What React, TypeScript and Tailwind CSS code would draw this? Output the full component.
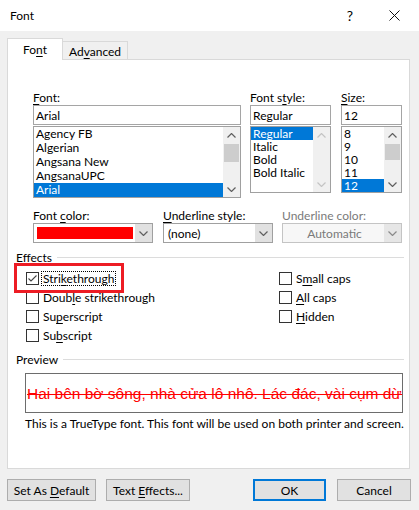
import React from "react";

const UI = "[font-family:Lato,'Noto_Sans',sans-serif]";

function U({ children }: { children: React.ReactNode }) {
  return <span className="underline decoration-1 underline-offset-[2px]">{children}</span>;
}

function Chevron({ up = false, color = "#606060" }: { up?: boolean; color?: string }) {
  return (
    <svg width="9" height="5" viewBox="0 0 9 5">
      <path
        d={up ? "M0.5 4.5 L4.5 0.5 L8.5 4.5" : "M0.5 0.5 L4.5 4.5 L8.5 0.5"}
        fill="none"
        stroke={color}
        strokeWidth="1.2"
      />
    </svg>
  );
}

function ScrollBar({ disabled = false, thumbTop = 0, thumbH = 0 }: { disabled?: boolean; thumbTop?: number; thumbH?: number }) {
  const c = disabled ? "#c4c4c4" : "#606060";
  return (
    <div className="flex w-[17px] flex-col bg-[#f0f0f0]">
      <div className="flex h-[16px] items-center justify-center">
        <Chevron up color={c} />
      </div>
      <div className="relative flex-1">
        {!disabled && (
          <div className="absolute left-[1px] right-[1px] bg-[#cdcdcd]" style={{ top: thumbTop, height: thumbH }} />
        )}
      </div>
      <div className="flex h-[16px] items-center justify-center">
        <Chevron color={c} />
      </div>
    </div>
  );
}

function Check({ checked = false }: { checked?: boolean }) {
  return (
    <div className="flex h-[13px] w-[13px] shrink-0 items-center justify-center border border-[#333333] bg-white">
      {checked && (
        <svg width="11" height="11" viewBox="0 0 11 11">
          <path d="M1.5 5.5 L4 8 L9.5 2.5" fill="none" stroke="#444444" strokeWidth="1.1" />
        </svg>
      )}
    </div>
  );
}

function Row({ children, focus = false, box = false }: { children: React.ReactNode; focus?: boolean; box?: boolean }) {
  return (
    <div className="flex h-[19px] items-center">
      <Check checked={box} />
      {focus ? (
        <span className="ml-[2px] border border-dotted border-black px-[1px] leading-[13px]">{children}</span>
      ) : (
        <span className="ml-[4px]">{children}</span>
      )}
    </div>
  );
}

function Button({ children, className }: { children: React.ReactNode; className: string }) {
  return (
    <div className={`flex h-[22px] items-center justify-center bg-[#e1e1e1] ${className}`}>
      <span>{children}</span>
    </div>
  );
}

function Item({ label, on, h13 }: { label: string; on: boolean; h13?: boolean }) {
  return (
    <div
      className={`flex items-center whitespace-nowrap pl-[2px] ${h13 ? "h-[13px] leading-[13px]" : "h-[14px] leading-[14px]"} ${
        on ? "bg-[#0078d7] text-white" : ""
      }`}
    >
      {label}
    </div>
  );
}

export default function App() {
  return (
    <div className={`flex h-[510px] w-[419px] flex-col overflow-hidden bg-[#f0f0f0] text-[12px] leading-[15px] text-black ${UI}`}>
      {/* title bar */}
      <div className="flex h-[31px] shrink-0 items-center bg-white pl-[10px]">
        <span>Font</span>
        <span className="ml-auto text-[14px]">?</span>
        <svg className="ml-[36px] mr-[19px]" width="11" height="11" viewBox="0 0 11 11">
          <path d="M0.5 0.5 L10.5 10.5 M10.5 0.5 L0.5 10.5" stroke="#111111" strokeWidth="1" />
        </svg>
      </div>

      {/* tabs */}
      <div className="-mb-px flex items-start px-[7px] pt-[7px]">
        <div className="relative z-10 flex h-[22px] w-[56px] items-center justify-center border border-b-0 border-[#d9d9d9] bg-white pb-[1px]">
          <span>Fo<U>n</U>t</span>
        </div>
        <div className="mt-[3px] flex h-[19px] w-[65px] items-center justify-center border border-l-0 border-[#d9d9d9] bg-[#f0f0f0] pt-[1px]">
          <span>Ad<U>v</U>anced</span>
        </div>
      </div>

      {/* panel */}
      <div className="mx-[7px] flex h-[410px] w-[403px] shrink-0 flex-col border border-[#d9d9d9] bg-white pt-[30px]">
        {/* font / style / size */}
        <div className="flex items-start pl-[25px]">
          <div className="flex w-[208px] flex-col">
            <div className="h-[15px]"><U>F</U>ont:</div>
            <div className="flex h-[20px] items-center border border-[#a5a5a5] pl-[2px]">Arial</div>
            <div className="mt-[1px] flex h-[72px] border border-[#a0a0a0]">
              <div className="flex flex-1 flex-col">
                {["Agency FB", "Algerian", "Angsana New", "AngsanaUPC", "Arial"].map((f) => (
                  <Item key={f} label={f} on={f === "Arial"} />
                ))}
              </div>
              <ScrollBar thumbTop={1} thumbH={18} />
            </div>
          </div>

          <div className="ml-[9px] flex w-[81px] flex-col">
            <div className="h-[15px]">Font s<U>t</U>yle:</div>
            <div className="flex h-[20px] items-center border border-[#a5a5a5] pl-[2px]">Regular</div>
            <div className="mt-[1px] flex h-[67px] border border-[#a0a0a0]">
              <div className="flex flex-1 flex-col">
                {["Regular", "Italic", "Bold", "Bold Italic"].map((s) => (
                  <Item key={s} label={s} on={s === "Regular"} h13 />
                ))}
              </div>
              <ScrollBar disabled />
            </div>
          </div>

          <div className="ml-[10px] flex w-[61px] flex-col">
            <div className="h-[15px]"><U>S</U>ize:</div>
            <div className="flex h-[20px] items-center border border-[#a5a5a5] pl-[2px]">12</div>
            <div className="mt-[1px] flex h-[67px] border border-[#a0a0a0]">
              <div className="flex flex-1 flex-col">
                {["8", "9", "10", "11", "12"].map((s) => (
                  <Item key={s} label={s} on={s === "12"} h13 />
                ))}
              </div>
              <ScrollBar thumbTop={1} thumbH={16} />
            </div>
          </div>
        </div>

        {/* colour / underline */}
        <div className="mt-[10px] flex items-start pl-[25px]">
          <div className="flex w-[120px] flex-col">
            <div className="h-[15px]">Font <U>c</U>olor:</div>
            <div className="flex h-[20px] border border-[#a0a0a0] bg-white">
              <div className="ml-[3px] mt-[3px] h-[12px] w-[96px] bg-[#ff0000]" />
              <div className="ml-auto flex w-[17px] items-center justify-center bg-[#e1e1e1]">
                <Chevron />
              </div>
            </div>
          </div>
          <div className="ml-[10px] flex w-[110px] flex-col">
            <div className="h-[15px]"><U>U</U>nderline style:</div>
            <div className="flex h-[20px] border border-[#a0a0a0] bg-white">
              <span className="flex items-center pl-[4px]">(none)</span>
              <div className="ml-auto flex w-[17px] items-center justify-center bg-[#e1e1e1]">
                <Chevron />
              </div>
            </div>
          </div>
          <div className="ml-[9px] flex w-[120px] flex-col text-[#7a7a7a]">
            <div className="h-[15px]">Underline color:</div>
            <div className="flex h-[20px] border border-[#c4c4c4] bg-[#f7f7f7]">
              <span className="flex flex-1 items-center justify-center pl-[2px]">Automatic</span>
              <div className="flex w-[17px] items-center justify-center bg-[#e6e6e6]">
                <Chevron color="#8a8a8a" />
              </div>
            </div>
          </div>
        </div>

        {/* effects */}
        <div className="mt-[7px] flex h-[15px] items-center pl-[8px] pr-[5px]">
          <span>Effects</span>
          <div className="ml-[5px] h-px flex-1 bg-[#dcdcdc]" />
        </div>
        <div className="mt-[4px] flex pl-[18px]">
          <div className="flex w-[253px] flex-col">
            <div className="relative">
              <div className="pointer-events-none absolute left-[-12px] top-[-6px] h-[30px] w-[110px] border-[3px] border-[#ed1c24]" />
              <Row box focus>Stri<U>k</U>ethrough</Row>
            </div>
            <Row>Doub<U>l</U>e strikethrough</Row>
            <Row>Su<U>p</U>erscript</Row>
            <Row>Su<U>b</U>script</Row>
          </div>
          <div className="flex flex-col">
            <Row>S<U>m</U>all caps</Row>
            <Row><U>A</U>ll caps</Row>
            <Row><U>H</U>idden</Row>
          </div>
        </div>

        {/* preview */}
        <div className="mt-[7px] flex h-[15px] items-center pl-[8px] pr-[5px]">
          <span>Preview</span>
          <div className="ml-[5px] h-px flex-1 bg-[#dcdcdc]" />
        </div>
        <div className="ml-[17px] mt-[6px] flex h-[40px] w-[378px] items-center overflow-hidden border border-[#6d6d6d] pl-[1px]">
          <span className="whitespace-nowrap text-[15.5px] text-[#ff0000] line-through [font-family:'Liberation_Sans',Arial,sans-serif]">
            Hai bên bờ sông, nhà cửa lô nhô. Lác đác, vài cụm dừa
          </span>
        </div>
        <div className="ml-[17px] mt-[3px] whitespace-nowrap">
          This is a TrueType font. This font will be used on both printer and screen.
        </div>
      </div>

      {/* buttons */}
      <div className="mt-[10px] flex px-[7px]">
        <Button className="w-[89px] border border-[#adadad]">Set As <U>D</U>efault</Button>
        <Button className="ml-[10px] w-[84px] border border-[#adadad]">Text <U>E</U>ffects...</Button>
        <Button className="ml-[63px] w-[73px] border-2 border-[#0078d7]">OK</Button>
        <Button className="ml-[11px] w-[74px] border border-[#adadad]">Cancel</Button>
      </div>
    </div>
  );
}
